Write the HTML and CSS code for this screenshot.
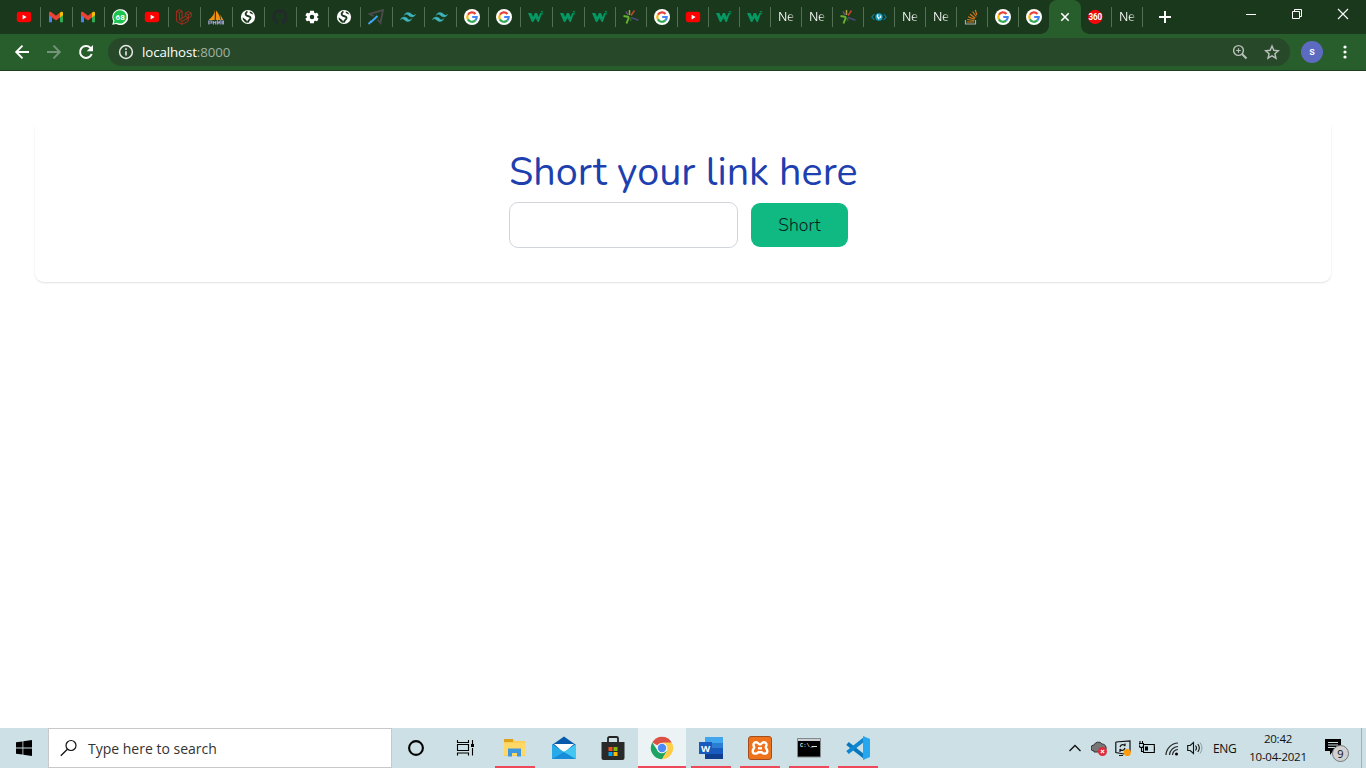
FILE: index.html
```html
<!DOCTYPE html>
<html lang="en">
<head>
<meta charset="utf-8">
<title>Link shortener</title>
<link rel="stylesheet" href="styles.css">
</head>
<body>
<svg class="defs" aria-hidden="true">
  <symbol id="yt" viewBox="0 0 16 16"><rect x=".8" y="2.800" width="14.400" height="10.400" rx="2.400" fill="#f00"/><path d="M6.600 5.800v4.600l4-2.300z" fill="#fff"/></symbol>
  <symbol id="gmail" viewBox="0 0 16 16"><path d="M1 5v8.200h3V7.500z" fill="#4285f4"/><path d="M12 7.500v5.700h3V5z" fill="#34a853"/><path d="M12 3.800v4.700l3-2.300V4c0-1.200-1.300-1.700-2.200-1z" fill="#fbbc04"/><path d="M1 4v2.200l3 2.300 4 3 4-3V3.600L8 6.700 3.200 3C2.300 2.300 1 2.800 1 4z" fill="#ea4335"/></symbol>
  <symbol id="google" viewBox="0 0 16 16"><circle cx="8" cy="8" r="8" fill="#fff"/><g fill="none" stroke-width="2.200"><path d="M11.500 4.900A4.700 4.700 0 0 0 3.900 5.700" stroke="#ea4335"/><path d="M3.900 5.700a4.700 4.700 0 0 0 0 4.700" stroke="#fbbc05"/><path d="M3.900 10.400a4.700 4.700 0 0 0 7.400 1" stroke="#34a853"/><path d="M11.300 11.400A4.700 4.700 0 0 0 12.700 8H8.200" stroke="#4285f4"/></g></symbol>
  <symbol id="globe" viewBox="0 0 16 16"><circle cx="8" cy="8" r="7.100" fill="#fff"/><path d="M7.500 2.500C5.500 3.500 5 5.500 6.500 6.500s3.500.5 4 2c.4 1.300-.3 2-1.500 2.700L7.500 13.500" fill="none" stroke="#1a381b" stroke-width="1.900"/><path d="m9.500 3.500 1.500 1.300 2.500.7-1.500-2-2-1z" fill="#1a381b"/><path d="M2.600 8.300 6.300 11l1.200 3-2.400-.8-2.200-2.600z" fill="#1a381b"/></symbol>
  <symbol id="laravel" viewBox="0 0 16 16"><path d="m.6 2.200 2.800-1.500 2.700 1.500v7l3.300-1.900V4.200l2.900-1.600 3 1.600v3.200l-3 1.700v3.100l-6.200 3.200-5.500-3.200zm0 0 2.800 1.500 2.700-1.500M3.400 3.700v7l2.700 1.500 6.200-3.100M9.400 4.200l2.900 1.600 3-1.600M12.300 5.800v3.300L9.400 7.300M6.100 12.200v3.200M3.400 10.700l2.700-1.500" fill="none" stroke="#a82c1e" stroke-width="1"/></symbol>
  <symbol id="pma" viewBox="0 0 16 16"><path d="M7 .5C6.700 4.500 4.500 8 .5 11h6.200zM8 1.500l-.2 9.500h4.500C12 7 10.500 4 8 1.500zM12.200 5.500l.8 5.500h2.300z" fill="#f29111"/><path d="M.8 15.500v-3.500h3v2h-3M5.500 12v3.500m0-2h2.200m0-1.500v3.500M9.500 15.500V12l1.300 2 1.300-2v3.500M14 15.500V12h1.500v3.500m-1.500-1.500h1.500" fill="none" stroke="#9c9ec8" stroke-width="1.200"/></symbol>
  <symbol id="github" viewBox="0 0 16 16"><path d="M8 .4a7.800 7.800 0 0 0-2.500 15.100c.4.100.5-.2.500-.4v-1.500c-2.200.5-2.700-1-2.700-1-.3-.8-.8-1.100-.8-1.100-.8-.5.100-.5.100-.5.800 0 1.200.8 1.200.8.700 1.300 1.900.9 2.300.7.100-.5.300-.9.500-1.100-1.800-.2-3.600-.9-3.600-3.900 0-.8.300-1.500.8-2.100-.1-.2-.4-1 .1-2.100 0 0 .7-.2 2.200.8a7 7 0 0 1 3.900 0c1.500-1 2.100-.8 2.100-.8.400 1.100.2 1.900.1 2.100.5.600.8 1.300.8 2.100 0 3-1.800 3.600-3.600 3.800.3.300.6.800.6 1.500v2.300c0 .2.100.5.500.4A7.800 7.800 0 0 0 8 .4z" fill="#24292e"/></symbol>
  <symbol id="gear" viewBox="0 0 24 24"><path d="M20.500 13c0-.3.100-.6.100-1s0-.7-.1-1l2.200-1.700c.2-.2.300-.4.100-.7l-2.100-3.600c-.1-.2-.4-.3-.6-.2l-2.600 1c-.5-.4-1.100-.8-1.800-1l-.4-2.800c0-.2-.2-.4-.5-.4H9.300c-.300 0-.5.200-.5.400L8.400 4.800c-.6.200-1.200.6-1.800 1L4 4.800c-.2-.1-.5 0-.6.200L1.200 8.600c-.1.200-.1.500.1.700L3.500 11c0 .3-.1.600-.1 1s0 .7.100 1l-2.200 1.700c-.2.200-.3.400-.1.700l2.100 3.600c.1.200.4.300.6.200l2.600-1c.5.400 1.100.8 1.800 1l.4 2.800c0 .2.200.4.500.4h5.500c.3 0 .5-.2.5-.4l.4-2.800c.6-.2 1.200-.6 1.800-1l2.600 1c.2.100.5 0 .6-.2l2.100-3.600c.1-.2.100-.5-.1-.7z" fill="#fff" transform="translate(1.200 1.200) scale(.9)"/><circle cx="12" cy="12" r="3.400" fill="#1a381b"/></symbol>
  <symbol id="arrow" viewBox="0 0 16 16"><path d="M5.500 7 1.500 5 15 1l-2.500 13-3-3.500" fill="none" stroke="#4b4b4b" stroke-width="1.900"/><path d="m.5 15 3-3m-1 1.500L9.500 7" stroke="#42a5f5" stroke-width="1.900" fill="none"/></symbol>
  <symbol id="tailwind" viewBox="1.500 1.500 21 21"><path d="M12 6c-2.670 0-4.330 1.330-5 4 1-1.330 2.170-1.830 3.500-1.500.76.190 1.310.74 1.910 1.350.98 1 2.120 2.150 4.590 2.150 2.670 0 4.330-1.330 5-4-1 1.330-2.170 1.830-3.500 1.500-.76-.19-1.300-.74-1.910-1.350C15.610 7.150 14.470 6 12 6zM7 12c-2.670 0-4.330 1.330-5 4 1-1.330 2.170-1.830 3.500-1.500.76.190 1.300.74 1.910 1.350C8.390 16.850 9.530 18 12 18c2.670 0 4.330-1.330 5-4-1 1.330-2.170 1.830-3.500 1.500-.76-.19-1.300-.74-1.910-1.350C10.610 13.150 9.470 12 7 12z" fill="#3fb4bd" stroke="#3fb4bd" stroke-width=".4"/></symbol>
  <symbol id="w3" viewBox="0 0 16 16"><path d="M0 4h3.400l1.800 4 1.600-4H9l1.700 4 1.500-4H14l-3.200 9H9.700L7.600 9l-2.400 4H3.900z" fill="#059862"/><path d="M12.800 2.500h2.100l-1.100 1.400c1.800.2 1.300 2.300-1.200 1.500" fill="none" stroke="#04824f" stroke-width="1"/></symbol>
  <symbol id="rays" viewBox="0 0 16 16"><g fill="none" stroke-width="1.500"><path d="M6 8 .5 7M6 8 3.500 14.500" stroke="#65b32e" stroke-width="2"/><path d="M5 6 3 2.500" stroke="#65538d"/><path d="M6.500 6V1" stroke="#b0a040"/><path d="m8 6.500 3.500-5" stroke="#c9442f"/><path d="m8 8.500 7.500 2.800" stroke="#50477b"/><path d="m7 9 1 3" stroke="#366733"/></g></symbol>
  <symbol id="code" viewBox="0 0 16 16"><path d="M3.300 5 .8 8l2.500 3M12.700 5l2.500 3-2.500 3" fill="none" stroke="#0a7fa8" stroke-width="1.100"/><circle cx="8" cy="8" r="3.700" fill="#13a0ca"/><path d="M7.300 5.500c-1.500 1.200-1.200 2.800.4 3.100v1.600M9.500 6.500v2.500" fill="none" stroke="#e2f7fa" stroke-width="1.400"/></symbol>
  <symbol id="stack" viewBox="0 0 16 16"><path d="M1.500 11v4h10v-4" fill="none" stroke="#aaa" stroke-width="1.200"/><path d="M3 13h7M3.200 10.500l7 1M4 7.800l6.500 2.500M6 5l5.200 4.200M8.500 2.500l3.800 5M11.300.8 12.800 6" stroke="#e0781f" stroke-width="1.100"/></symbol>
</svg>

<header class="tabstrip">
  <div class="tabs">
    <div class="tab"><svg><use href="#yt"/></svg></div>
    <div class="tab"><svg><use href="#gmail"/></svg></div>
    <div class="tab"><svg><use href="#gmail"/></svg></div>
    <div class="tab"><svg viewBox="0 0 16 16"><path d="M.2 15.800 1.300 12A8 8 0 1 1 4.200 15z" fill="#fff"/><path d="m1.600 14.400.9-2.600A6.600 6.600 0 1 1 4.600 13.700z" fill="#1bc54b"/><text x="8.200" y="10.900" text-anchor="middle" class="wa-count">68</text></svg></div>
    <div class="tab"><svg><use href="#yt"/></svg></div>
    <div class="tab"><svg><use href="#laravel"/></svg></div>
    <div class="tab"><svg><use href="#pma"/></svg></div>
    <div class="tab"><svg><use href="#globe"/></svg></div>
    <div class="tab"><svg><use href="#github"/></svg></div>
    <div class="tab"><svg><use href="#gear"/></svg></div>
    <div class="tab"><svg><use href="#globe"/></svg></div>
    <div class="tab"><svg><use href="#arrow"/></svg></div>
    <div class="tab"><svg><use href="#tailwind"/></svg></div>
    <div class="tab"><svg><use href="#tailwind"/></svg></div>
    <div class="tab"><svg><use href="#google"/></svg></div>
    <div class="tab"><svg><use href="#google"/></svg></div>
    <div class="tab"><svg><use href="#w3"/></svg></div>
    <div class="tab"><svg><use href="#w3"/></svg></div>
    <div class="tab narrow"><svg><use href="#w3"/></svg></div>
    <div class="tab narrow"><svg><use href="#rays"/></svg></div>
    <div class="tab narrow"><svg><use href="#google"/></svg></div>
    <div class="tab narrow"><svg><use href="#yt"/></svg></div>
    <div class="tab narrow"><svg><use href="#w3"/></svg></div>
    <div class="tab narrow"><svg><use href="#w3"/></svg></div>
    <div class="tab narrow"><span class="tab-text">Ne</span></div>
    <div class="tab narrow"><span class="tab-text">Ne</span></div>
    <div class="tab narrow"><svg><use href="#rays"/></svg></div>
    <div class="tab narrow"><svg><use href="#code"/></svg></div>
    <div class="tab narrow"><span class="tab-text">Ne</span></div>
    <div class="tab narrow"><span class="tab-text">Ne</span></div>
    <div class="tab narrow"><svg><use href="#stack"/></svg></div>
    <div class="tab narrow"><svg><use href="#google"/></svg></div>
    <div class="tab narrow bare"><svg><use href="#google"/></svg></div>
    <div class="tab narrow active"><svg viewBox="0 0 16 16"><path d="m4.300 4.300 7.400 7.400m0-7.400-7.400 7.400" stroke="#fff" stroke-width="1.600"/></svg></div>
    <div class="tab narrow"><svg viewBox="0 0 16 16"><circle cx="7.200" cy="8" r="7.200" fill="#f20808"/><text x="7.200" y="10.900" text-anchor="middle" class="r-count">360</text></svg></div>
    <div class="tab narrow"><span class="tab-text">Ne</span></div>
    <svg class="plus" viewBox="0 0 12 12"><path d="M6 0v12M0 6h12" stroke="#fff" stroke-width="2"/></svg>
  </div>
  <div class="window-buttons">
    <svg viewBox="0 0 12 12"><path d="M1 6.500h10" stroke="#fff"/></svg>
    <svg viewBox="0 0 12 12"><path d="M1.500 3.500h7v7h-7zM3.500 3.500v-2h7v7h-2" fill="none" stroke="#fff"/></svg>
    <svg viewBox="0 0 12 12"><path d="m1 1 10 10M11 1 1 11" stroke="#fff" stroke-width="1.100"/></svg>
  </div>
</header>

<nav class="toolbar">
  <svg class="nav-icon" viewBox="0 0 16 16"><path d="M15 8H2.500m6-6.300L2.200 8l6.300 6.300" fill="none" stroke="#fff" stroke-width="1.900"/></svg>
  <svg class="nav-icon" viewBox="0 0 16 16"><path d="M1 8h12.500m-6-6.300L13.800 8l-6.300 6.300" fill="none" stroke="#759578" stroke-width="1.900"/></svg>
  <svg class="nav-icon" viewBox="0 0 16 16"><path d="M13.700 10A6 6 0 1 1 12.300 3.700L14 5.500" fill="none" stroke="#fff" stroke-width="2"/><path d="M15 1v6.300H8.700z" fill="#fff"/></svg>
  <div class="address">
    <svg class="info" viewBox="0 0 16 16"><circle cx="8" cy="8" r="6.400" fill="none" stroke="#e6ebe6" stroke-width="1.500"/><path d="M8 7.200v4.300M8 4.300v1.700" stroke="#e6ebe6" stroke-width="1.600"/></svg>
    <span class="url">localhost<span class="port">:8000</span></span>
    <svg class="zoom" viewBox="0 0 16 16"><circle cx="6.500" cy="6.500" r="4.900" fill="none" stroke="#b9c2ba" stroke-width="1.400"/><path d="m10 10 4.500 4.500" stroke="#b9c2ba" stroke-width="1.900"/><path d="M6.500 4.200v4.600M4.200 6.500h4.600" stroke="#b9c2ba" stroke-width="1.200"/></svg>
    <svg class="star" viewBox="0 0 16 16"><path d="m8 2 1.800 4.300 4.600.4-3.500 3 1.100 4.500-4-2.400-4 2.400 1.100-4.500-3.500-3 4.600-.4z" fill="none" stroke="#b9c2ba" stroke-width="1.400"/></svg>
  </div>
  <div class="avatar">s</div>
  <svg class="kebab" viewBox="0 0 4 14"><circle cx="2" cy="2" r="1.600"/><circle cx="2" cy="7" r="1.600"/><circle cx="2" cy="12" r="1.600"/></svg>
</nav>

<main class="page">
  <section class="card">
    <form class="form" onsubmit="return false">
      <h1 class="title">Short your link here</h1>
      <div class="row">
        <input class="field" type="text" aria-label="Link">
        <button class="submit" type="button">Short</button>
      </div>
    </form>
  </section>
</main>

<footer class="taskbar">
  <div class="start"><svg viewBox="0 0 16 16"><path d="M0 2.300 6.500 1.400v6.200H0zM7.300 1.200 16 0v7.600H7.300zM0 8.400h6.500v6.200L0 13.700zM7.300 8.400H16V16l-8.700-1.200z"/></svg></div>
  <div class="search">
    <svg viewBox="0 0 18 18"><circle cx="11" cy="6.500" r="5" fill="none" stroke="#111" stroke-width="1.200"/><path d="m7.400 10.200-6.600 6.500" stroke="#111" stroke-width="1.300"/></svg>
    <span>Type here to search</span>
  </div>
  <div class="apps">
    <div class="app ring"><svg viewBox="0 0 24 24"><circle cx="12" cy="12" r="6.900" fill="none" stroke="#000" stroke-width="2.100"/></svg></div>
    <div class="app views"><svg viewBox="0 0 24 24"><path d="M4.500 4v2.500h11V4M4.500 19.500V17h11v2.500M4.500 8.500h11v6h-11zM19.500 4v4M19.500 12v7.500" fill="none" stroke="#000" stroke-width="1.100"/><path d="M18 8h3v3h-3z"/></svg></div>
    <div class="app open"><svg viewBox="0 0 24 24"><path d="M1 3h9l2 2h10v15H1z" fill="#fbcf56"/><path d="M1 3h9v3H1z" fill="#dfa119"/><path d="M1 7h21.500v12H1z" fill="#ffd868"/><path d="M5 12.500h13v8h-4V17H9v3.500H5z" fill="#3e98dd"/></svg></div>
    <div class="app"><svg viewBox="0 0 24 24"><path d="M0 9 12 .500l12 8.500v4H0z" fill="#0759ab"/><path d="M2 8h20l-8 7h-4z" fill="#fff"/><path d="m0 8 12 8 12-8v15H0z" fill="#29aae8"/><path d="m0 23 12-7 12 7z" fill="#178dd9"/><path d="m12 16 12-8v15z" fill="#42c7f3"/></svg></div>
    <div class="app"><svg viewBox="0 0 24 24"><path d="M7 7V2.500Q7 1 8.500 1h7Q17 1 17 2.500V7" fill="none" stroke="#222" stroke-width="1.800"/><path d="M.5 6h23v16q0 2-2 2h-19q-2 0-2-2z" fill="#292929"/><path d="M7.500 11h4v4h-4z" fill="#f25022"/><path d="M12.500 11h4v4h-4z" fill="#7fba00"/><path d="M7.500 16h4v4h-4z" fill="#00a4ef"/><path d="M12.500 16h4v4h-4z" fill="#ffb900"/></svg></div>
    <div class="app open current"><svg viewBox="0 0 24 24"><path d="M12 12 2.300 6.400a11.200 11.200 0 0 1 19.400 0z" fill="#dd5144"/><path d="M2.300 6.400A11.200 11.200 0 0 0 12 23.200l5-8.200-8.500 1z" fill="#1da462"/><path d="M21.700 6.400A11.200 11.200 0 0 1 12 23.200l5-8.400-4-8.400z" fill="#ffcd46"/><circle cx="12" cy="12" r="5.300" fill="#f5f5f5"/><circle cx="12" cy="12" r="4.200" fill="#4c8bf5"/></svg></div>
    <div class="app open"><svg viewBox="0 0 24 24"><path d="M6 1h18v22H6z" fill="#185abd"/><path d="M6 1h18v6H6z" fill="#41a5ee"/><path d="M6 7h18v5H6z" fill="#2b7cd3"/><path d="M6 18h18v5H6z" fill="#103f91"/><path d="M0 6h13v12H0z" fill="#185abd"/><text x="6.500" y="15.500" text-anchor="middle" class="word">W</text></svg></div>
    <div class="app open"><svg viewBox="0 0 24 24"><rect x=".5" y=".5" width="23" height="23" rx="2.500" fill="#ee711b" stroke="#a64e1b"/><path d="M8.200 6.300C5.500 6.300 5 8.500 6 10.500c1 1.500-1.300 2-1.300 4.500 0 3.300 4 3.300 5.600 1.200h3.400c1.600 2.100 5.600 2.100 5.600-1.200 0-2.500-2.300-3-1.300-4.500 1-2 .5-4.200-2.200-4.200-2 0-2.300 2.200-3.800 2.200s-1.800-2.200-3.800-2.200z" fill="none" stroke="#fff" stroke-width="2.400"/><path d="M10 12.300h4" stroke="#fff" stroke-width="2.300"/></svg></div>
    <div class="app open"><svg viewBox="0 0 24 24"><path d="M.5 2.500h23v18.500H.5z" fill="#000" stroke="#84898b"/><path d="M1 3h22v2H1z" fill="#c9ced2"/><text x="3" y="11.300" class="prompt">C:\_</text><path d="M14.500 10.500H20" stroke="#ddd"/></svg></div>
    <div class="app open"><svg viewBox="0 0 24 24"><path d="M1.500 7.500 18 20.500" stroke="#0878be" stroke-width="4"/><path d="M1.500 16.500 18 3.500" stroke="#0f86cf" stroke-width="4"/><path d="m17 0 7 3v18l-7 3z" fill="#24a7ee"/></svg></div>
  </div>
  <div class="tray">
    <svg class="chevron" viewBox="0 0 12 12"><path d="m.5 9 5.500-5.500L11.500 9" fill="none" stroke="#111" stroke-width="1.300"/></svg>
    <svg class="t16" viewBox="0 0 16 16"><path d="M3 11a3 3 0 0 1 0-6 4.600 4.600 0 0 1 8-1 4 4 0 0 1 4 5l-1 3H3z" fill="#777" stroke="#333"/><circle cx="11.500" cy="11.500" r="4.500" fill="#dc2d3b"/><path d="m9.800 9.800 3.400 3.400m0-3.400-3.400 3.400" stroke="#fff" stroke-width="1.100"/></svg>
    <svg class="t16" viewBox="0 0 16 16"><path d="m.8 2 14.200-1v11M.8 2v10.500L9 14m-5 1.500h4M5 7c1-3 4-3 5-1V3.500M10 8c-1 3-4 3-5 1v3" fill="none" stroke="#111" stroke-width="1.200"/><circle cx="12.300" cy="12.500" r="3.600" fill="#ff9a0b"/></svg>
    <svg class="t16" viewBox="0 0 16 16"><path d="M4.500 4.500h10.800v8H4.500zM15.500 7v3M0 3.500h4.500v2q0 2-2 2T0 5.500zM1 3V1M3.500 3V1M2.500 7.500v4h2" fill="none" stroke="#000" stroke-width="1.100"/><path d="M6 6.500h3v4H6z"/></svg>
    <svg class="t16 wifi" viewBox="0 0 16 16"><g fill="none" stroke="#222" stroke-width="1.200"><path d="M2 15A12.500 12.500 0 0 1 14 3M5.500 15A9 9 0 0 1 14 6.500M8.500 15A6 6 0 0 1 14 9.500"/></g><circle cx="12.500" cy="14" r="1.500"/></svg>
    <svg class="t16 vol" viewBox="0 0 16 16"><path d="M.7 5.500h2.500L6.500 2.500v11L3.200 10.500H.7z" fill="none" stroke="#111" stroke-width="1.100"/><path d="M8.500 5.500q2 2.500 0 5M10.800 4q3 4 0 8" fill="none" stroke="#111" stroke-width="1.100"/><path d="M13 2.500q4 5.500 0 11" fill="none" stroke="#8ba0a5"/></svg>
    <span class="lang">ENG</span>
    <div class="clock"><span>20:42</span><span>10-04-2021</span></div>
    <div class="notify"><svg viewBox="0 0 16 16"><path d="M0 0h16v12H8l-3 4v-4H0z"/><path d="M3 3.500h10M3 6h10M3 8.500h7" stroke="#cce0e5"/></svg><span class="badge">9</span></div>
    <div class="desktop-edge"></div>
  </div>
</footer>
</body>
</html>
```
FILE: styles.css
```css
* { box-sizing: border-box; }

body {
  margin: 0;
  width: 1366px;
  height: 768px;
  overflow: hidden;
  display: flex;
  flex-direction: column;
  background: #fff;
  font-family: "Open Sans", "Noto Sans", sans-serif;
}

svg { display: block; flex: none; }
.defs { width: 0; height: 0; position: absolute; }

/* Browser tabs */
.tabstrip {
  height: 34px;
  flex: none;
  display: flex;
  justify-content: space-between;
  background: #1a381b;
}
.tabs { display: flex; padding-left: 9px; }
.tab {
  width: 32px;
  padding: 9px 0 0 7px;
  background: linear-gradient(#547054, #547054) right 7px / 1px 20px no-repeat;
}
.tab svg { width: 16px; height: 16px; }
.tab.narrow { width: 31px; }
.tab.bare { background: none; }
.tab.active {
  position: relative;
  width: 32px;
  margin-left: -1px;
  padding-left: 8px;
  background: #285e2b;
  border-radius: 8px 8px 0 0;
}
.tab.active::before,
.tab.active::after {
  content: "";
  position: absolute;
  bottom: 0;
  width: 8px;
  height: 8px;
}
.tab.active::before { left: -8px; background: radial-gradient(circle at 0 0, transparent 7.5px, #285e2b 8px); }
.tab.active::after { right: -8px; background: radial-gradient(circle at 100% 0, transparent 7.5px, #285e2b 8px); }
.tab-text {
  display: block;
  width: 16px;
  overflow: hidden;
  font-size: 12.5px;
  font-weight: 500;
  letter-spacing: -.3px;
  line-height: 16px;
  background: linear-gradient(90deg, #fff 60%, #61775f);
  -webkit-background-clip: text;
  color: transparent;
}
.wa-count, .r-count { font-family: Roboto, sans-serif; font-weight: 700; font-size: 8px; fill: #fff; }
.r-count { font-size: 8.2px; letter-spacing: -.2px; }
.plus { width: 12px; height: 12px; margin: 11px 0 0 16px; }
.window-buttons { display: flex; gap: 34px; padding: 8px 17px 0 0; }
.window-buttons svg { width: 12px; height: 12px; }

/* Address toolbar */
.toolbar {
  height: 37px;
  flex: none;
  display: flex;
  align-items: center;
  padding: 0 19px 0 14px;
  background: #285e2b;
  border-bottom: 1px solid #1c3d1e;
}
.nav-icon { width: 16px; height: 16px; margin-right: 16px; }
.address {
  width: 1182px;
  height: 28px;
  margin-left: -2px;
  padding: 0 10px 0 10px;
  display: flex;
  align-items: center;
  border-radius: 14px;
  background: #274929;
}
.info { width: 16px; height: 16px; }
.url { flex: 1; margin-left: 8px; font-size: 13.3px; letter-spacing: -.1px; color: #fff; }
.port { color: #a1afa2; }
.zoom, .star { width: 16px; height: 16px; }
.star { margin-left: 16px; }
.avatar {
  width: 22px;
  height: 22px;
  margin-left: 11px;
  border-radius: 50%;
  background: #5c6bc0;
  color: #fff;
  font: 500 11px/21px Roboto, sans-serif;
  text-align: center;
}
.kebab { width: 4px; height: 14px; margin-left: 20px; fill: #fff; }

/* Page */
.page { flex: 1; padding: 48px 35px 0; }
.card {
  height: 163px;
  padding-top: 30px;
  border-radius: 9px;
  background: #fff;
  box-shadow: 0 1px 2px rgba(0, 0, 0, .12);
  clip-path: inset(7px -4px -4px);
}
.form { width: 348px; margin: 0 auto; font-family: Nunito, Lato, sans-serif; }
.title {
  margin: 0;
  height: 53px;
  font-size: 39.6px;
  line-height: 46px;
  font-weight: 400;
  white-space: nowrap;
  color: #1e40af;
}
.row { display: flex; align-items: center; gap: 13px; }
.field {
  width: 229px;
  height: 46px;
  padding: 0 12px;
  border: 1px solid #d1d5db;
  border-radius: 9px;
  background: #fff;
  font: inherit;
}
.submit {
  width: 97px;
  height: 44px;
  padding: 0;
  border: 0;
  border-radius: 9px;
  background: #10b981;
  color: #0b1f1c;
  font: 350 17.6px/44px Nunito, Lato, sans-serif;
}

/* Taskbar */
.taskbar { height: 40px; flex: none; display: flex; background: #cce0e5; }
.start { width: 48px; padding: 12px 0 0 16px; }
.start svg { width: 16px; height: 16px; }
.search {
  width: 344px;
  display: flex;
  align-items: center;
  gap: 10px;
  padding-left: 11px;
  border: 1px solid #c6c8c9;
  background: #fff;
  color: #333;
  font-size: 14px;
}
.search svg { width: 18px; height: 18px; }
.apps { display: flex; gap: 1px; padding-left: 1px; }
.app {
  width: 48px;
  height: 40px;
  display: flex;
  align-items: center;
  justify-content: center;
}
.app.ring { margin-left: -1px; margin-right: 1px; }
.app.views svg { margin-left: -3px; }
.app svg { width: 24px; height: 24px; }
.app.open { background: linear-gradient(#ee485b, #ee485b) center bottom / 40px 2px no-repeat; }
.app.open.current { background: linear-gradient(#ee485b, #ee485b) center bottom / 48px 2px no-repeat #ebf3f5; }
.word { font: 700 9.5px "Open Sans", sans-serif; fill: #fff; }
.prompt { font: 700 5.5px "Liberation Mono", monospace; fill: #ddd; }
.tray { margin-left: auto; display: flex; align-items: center; color: #111; font-size: 12px; }
.chevron { width: 12px; height: 12px; margin-right: 10px; }
.t16 { width: 16px; height: 16px; margin-right: 8px; }
.wifi { margin-left: 1px; margin-right: 7px; }
.lang { width: 23px; font-size: 12px; letter-spacing: -.4px; margin-left: 2px; }
.clock {
  width: 62px;
  margin-left: 11px;
  display: flex;
  flex-direction: column;
  align-items: center;
  font-size: 11.5px;
  line-height: 18px;
  letter-spacing: -.25px;
  white-space: nowrap;
}
.notify { position: relative; width: 26px; height: 24px; margin: 2px 0 0 16px; }
.notify svg { width: 16px; height: 16px; margin-top: 2px; }
.badge {
  position: absolute;
  left: 7px;
  top: 8px;
  width: 17px;
  height: 17px;
  border: 1px solid #777;
  border-radius: 50%;
  background: #d0d1d2;
  font-size: 11px;
  line-height: 15px;
  text-align: center;
}
.desktop-edge { width: 5px; height: 40px; margin-left: 10px; border-left: 1px solid #9fb1b6; }
```
